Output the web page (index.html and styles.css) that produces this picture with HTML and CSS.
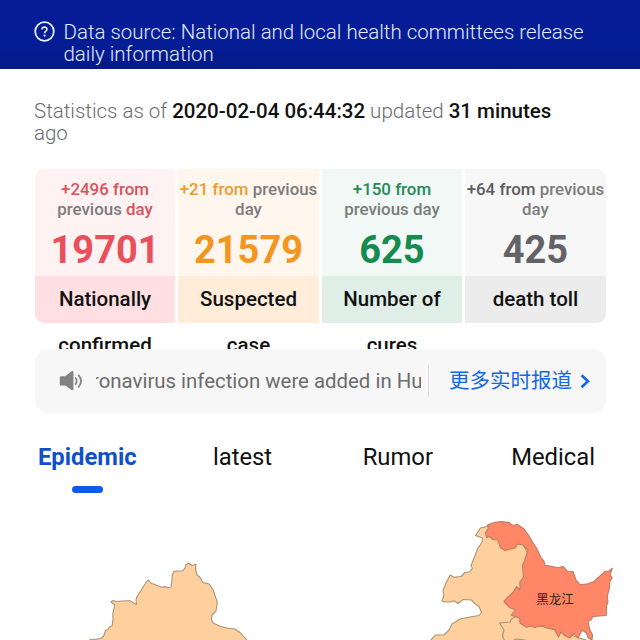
FILE: index.html
```html
<!DOCTYPE html>
<html lang="en">
<head>
<meta charset="utf-8">
<title>Epidemic statistics</title>
<link rel="stylesheet" href="styles.css">
</head>
<body>
<header class="source">
  <svg class="source-icon" viewBox="0 0 22 22" width="22" height="22">
    <circle cx="10.5" cy="10.5" r="9.3" fill="none" stroke="#e6efff" stroke-width="1.8"/>
    <path d="M8 8.6C8 5.2 13 5.4 13 8.3C13 10.2 10.6 10.2 10.6 12.3" fill="none" stroke="#e6efff" stroke-width="1.6"/>
    <circle cx="10.6" cy="14.6" r="1.1" fill="#e6efff"/>
  </svg>
  <p class="source-text"><span class="source-line">Data source: National and local health committees release</span> daily information</p>
</header>
<main>
  <p class="updated">Statistics as of <b>2020-02-04 06:44:32</b> updated <b>31 minutes</b><br>ago</p>
  <section class="cards">
    <article class="card card-red">
      <div class="card-top"><p class="delta"><em>+2496 from</em><br>previous <em>day</em></p><p class="count">19701</p></div>
      <p class="label">Nationally<br>confirmed</p>
    </article>
    <article class="card card-orange">
      <div class="card-top"><p class="delta"><em>+21 from</em> previous<br>day</p><p class="count">21579</p></div>
      <p class="label">Suspected<br>case</p>
    </article>
    <article class="card card-green">
      <div class="card-top"><p class="delta"><em>+150 from</em><br>previous day</p><p class="count">625</p></div>
      <p class="label">Number of<br>cures</p>
    </article>
    <article class="card card-gray">
      <div class="card-top"><p class="delta"><em>+64 from</em> previous<br>day</p><p class="count">425</p></div>
      <p class="label">death toll</p>
    </article>
  </section>
  <section class="ticker">
    <svg class="speaker" viewBox="0 0 26 22" width="26" height="22">
      <path d="M3 6.3H7.2L13.6 1.3Q15.4 .6 15.4 2.3V19Q15.4 20.7 13.6 20L7.2 15.6H3Q1.8 15.6 1.8 14.4V7.5Q1.8 6.3 3 6.3Z" fill="#828282"/>
      <path d="M17.2 7.5Q20.2 11 17.2 14.7M20.3 4.9Q25.8 11 20.3 17.3" fill="none" stroke="#858585" stroke-width="1.8"/>
    </svg>
    <div class="news"><span class="news-text">ronavirus infection were added in Hu</span></div>
    <a class="more">更多实时报道</a>
    <svg class="chevron" viewBox="0 0 10 16" width="10" height="16"><path d="M1.6 2.2L7.9 8.2L1.6 14.2" fill="none" stroke="#1268e8" stroke-width="2.7"/></svg>
  </section>
  <nav class="tabs">
    <a class="tab active">Epidemic</a>
    <a class="tab">latest</a>
    <a class="tab">Rumor</a>
    <a class="tab">Medical</a>
  </nav>
  <svg class="map" viewBox="0 510 640 131" width="640" height="131">
    <g stroke="#a99376" stroke-width="1.1" stroke-linejoin="round" fill="#ffd09e">
      <path d="M88 641L91 639.3L96 639.2L99 638.8L101.5 638L103.5 636.5L105 632L105.8 630L108 629.5L109 627.5L112 626L113 619L112.8 614L114.3 607L114.8 604.5L112 603.3L111 601.7L113 600.5L116 601.5L122 601L127 600.7L130.5 600.8L132.5 602.5L136.5 604.5L136 600L136.7 597L141 590.5L146 582.5L148.2 580L151 583.2L156 585L162 587.3L164.5 586.6L168 587.8L171 587L172 580L172.3 575L174 571.4L178 571L183 570.7L185 568L185.8 564.8L189 563.3L192 565.5L196 564.2L195.5 569L197 575L200 577.5L203 582.5L209 584L213 589.5L214.8 595L217.3 602L216 611L212 615L211.5 619.5L213 623L220 626.3L228 628.2L235 629L240 632.5L246 639L248 642Z"/>
      <path d="M429 642L435.5 635L444 635L449 630L452 624L460 619L470 617L479 615.5L481.5 612.5L479 606.5L475 603.7L471.5 600L463 599.5L458 603.5L454 600.7L450 602L445 602L442 601L444 595L443 590.5L446 583L450.3 575L454 577.2L461 576.5L465 572.5L470 571.8L472.5 568L471 565.7L474.5 557L477.5 549L482 542L482.5 538L475.5 535.5L480.5 528L489 526L500 531L522 542L531 560L527 585L518 605L524 622L552 629L592 642Z"/>
      <path d="M515 617L511 619.5L510.5 622L499.5 623L504 630L502.5 636L505 642" fill="none"/>
      <path d="M511 642L516 639L525 640L530 642" fill="none"/>
    </g>
    <path d="M487.5 525L495 522.2L502 521.6L509 522.6L513 525.5L517 524.3L524 529L528.5 535L533 543L536 547L541 557.5L544 561L545 565.3L550 566L558 567.7L563 566.5L567.5 571.3L573 571.5L576 580L580 584.7L588 583.8L594 581.5L600 576L605 571.5L609 571L612.3 568.3L610 575L612.2 577.5L609.7 582L609.5 588L607.2 596L608 602L606.5 606L606.3 615.5L593 616.5L591 620L588 621L589.5 629L592.5 635L592 640L588 637.8L586.5 633L582 630L578 638L574 633.5L569.5 638L564.5 635.5L561 632L558.5 637L554.5 629.5L547 628L541.5 625.5L535 627.5L530 626L526.5 627.2L523 625L520 623L519.7 618L511 615.3L515.5 610L509.5 607.5L503.8 601.5L508 597L513 592.5L516.5 586.5L520.2 590L519.8 582L523.5 577L522.5 566L525.5 558L528 550L523 545L517.5 544L515 548L505 550.5L500.5 547.8L498 540L493 539.5L489.5 536.5L486.5 537.5L485.5 533L488.5 528Z" fill="#ff8768" stroke="#bd7c62" stroke-width="1.1" stroke-linejoin="round"/>
    <text class="map-label" x="536.3" y="603.5">黑龙江</text>
  </svg>
</main>
</body>
</html>
```
FILE: styles.css
```css
* { box-sizing: border-box; margin: 0; padding: 0; }
body {
  width: 640px;
  height: 640px;
  overflow: hidden;
  background: #fff;
  font-family: Roboto, "Noto Sans CJK SC", sans-serif;
  color: #111;
}
.source {
  display: flex;
  gap: 7.5px;
  height: 68.5px;
  padding: 21px 34px 0;
  background: linear-gradient(#061c98, #051d94 65%, #041a88);
  color: #e1ebff;
}
.source-icon { flex: none; }
.source-text { font-size: 20.48px; font-weight: 300; line-height: 22px; white-space: nowrap; }
.source-line { display: block; }
.updated {
  height: 100px;
  padding: 31px 34px 0;
  font-size: 20.5px;
  font-weight: 300;
  line-height: 22px;
  color: #6c6c6c;
  white-space: nowrap;
}
.updated b { font-weight: 500; color: #111; }
.cards {
  display: grid;
  grid-template-columns: repeat(4, 1fr);
  gap: 3.4px;
  width: 570.5px;
  height: 154px;
  margin-left: 35px;
}
.card { display: flex; flex-direction: column; min-width: 0; text-align: center; }
.card-top { height: 107.5px; padding-top: 10.5px; }
.card:first-child .card-top { border-top-left-radius: 9px; }
.card:last-child .card-top { border-top-right-radius: 9px; }
.card:first-child .label { border-bottom-left-radius: 9px; }
.card:last-child .label { border-bottom-right-radius: 9px; }
.delta {
  display: flow-root;
  margin: 0 -5px;
  font-size: 16.9px;
  font-weight: 500;
  line-height: 20px;
  color: #7c7c7c;
  white-space: nowrap;
}
.delta em { font-style: normal; }
.count { margin-top: 10px; font-size: 38px; font-weight: 700; line-height: 42px; }
.label { height: 46.5px; font-size: 20.5px; font-weight: 500; line-height: 46px; }
.card-red .card-top { background: #fff2f3; }
.card-red .label { background: #ffdfe1; }
.card-red em { color: #d9535b; }
.card-red .count { color: #e8505b; }
.card-orange .card-top { background: #fff6ee; }
.card-orange .label { background: #ffecd9; }
.card-orange em { color: #ef9a2d; }
.card-orange .count { color: #f4951f; }
.card-green .card-top { background: #f1f8f5; }
.card-green .label { background: #dfeee6; }
.card-green em { color: #24895a; }
.card-green .count { color: #178a50; }
.card-gray .card-top { background: #f7f7f7; }
.card-gray .label { background: #ececec; }
.card-gray em { color: #5c5c5e; }
.card-gray .count { color: #626267; }
.ticker {
  position: relative;
  display: flex;
  align-items: center;
  width: 571px;
  height: 64px;
  margin: 26.5px 0 0 35px;
  padding-left: 23px;
  border-radius: 14px;
  background: #f7f7f7;
}
.speaker { flex: none; }
.news {
  width: 325px;
  margin-left: 12px;
  overflow: hidden;
  font-size: 20.4px;
  line-height: 26px;
  color: #6c6c6c;
  white-space: nowrap;
}
.news-text { margin-left: -4px; }
.more {
  height: 32px;
  margin-left: 7px;
  padding-left: 20px;
  border-left: 1.5px solid #dedede;
  font-size: 20.5px;
  line-height: 33px;
  color: #1268e8;
  white-space: nowrap;
}
.chevron { flex: none; margin-left: 7.5px; }
.tabs {
  display: grid;
  grid-template-columns: repeat(4, 1fr);
  width: 621px;
  height: 97px;
  margin-left: 9.7px;
  padding-top: 30px;
  font-size: 23.8px;
  line-height: 28px;
}
.tab { display: flex; flex-direction: column; align-items: center; }
.active { font-weight: 700; color: #0e50cc; }
.active::after {
  content: "";
  width: 31px;
  height: 7px;
  margin-top: 15px;
  border-radius: 4px;
  background: #0b5bea;
}
.map { display: block; }
.map-label { font-family: "Noto Sans CJK SC", sans-serif; font-size: 12.5px; fill: #321d17; }
```
